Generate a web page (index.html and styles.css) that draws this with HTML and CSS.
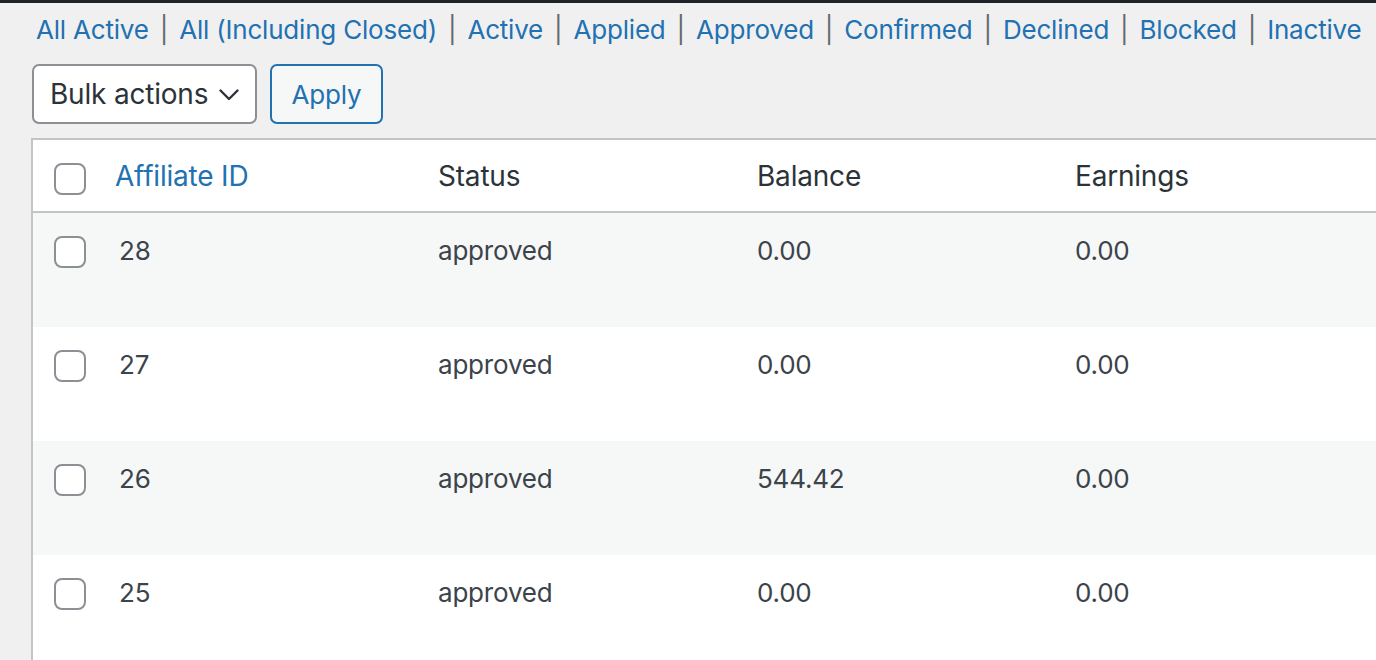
FILE: index.html
```html
<!DOCTYPE html>
<html lang="en">
<head>
<meta charset="utf-8">
<title>Affiliates</title>
<link rel="stylesheet" href="styles.css">
</head>
<body>
<div class="topbar"></div>
<div class="wrap">
  <ul class="subsubsub">
    <li><a href="#">All Active</a></li>
    <li class="sep">|</li>
    <li><a href="#">All (Including Closed)</a></li>
    <li class="sep">|</li>
    <li><a href="#">Active</a></li>
    <li class="sep">|</li>
    <li><a href="#">Applied</a></li>
    <li class="sep">|</li>
    <li><a href="#">Approved</a></li>
    <li class="sep">|</li>
    <li><a href="#">Confirmed</a></li>
    <li class="sep">|</li>
    <li><a href="#">Declined</a></li>
    <li class="sep">|</li>
    <li><a href="#">Blocked</a></li>
    <li class="sep">|</li>
    <li><a href="#">Inactive</a></li>
  </ul>
  <div class="tablenav">
    <div class="select">
      <span>Bulk actions</span>
      <svg class="chev" width="20" height="12" viewBox="0 0 20 12"><path d="M1.5 1.5 L10 10 L18.5 1.5" fill="none" stroke="#2c3338" stroke-width="2.4" stroke-linecap="round" stroke-linejoin="round"/></svg>
    </div>
    <button class="button">Apply</button>
  </div>
  <table class="list">
    <colgroup>
      <col class="c-check"><col class="c-col"><col class="c-col"><col class="c-col3"><col>
    </colgroup>
    <thead>
      <tr>
        <th class="check"><span class="cb"></span></th>
        <th class="idh"><a href="#">Affiliate ID</a></th>
        <th>Status</th>
        <th>Balance</th>
        <th>Earnings</th>
      </tr>
    </thead>
    <tbody>
      <tr class="alt">
        <td class="check"><span class="cb"></span></td>
        <td>28</td><td>approved</td><td>0.00</td><td>0.00</td>
      </tr>
      <tr>
        <td class="check"><span class="cb"></span></td>
        <td>27</td><td>approved</td><td>0.00</td><td>0.00</td>
      </tr>
      <tr class="alt">
        <td class="check"><span class="cb"></span></td>
        <td>26</td><td>approved</td><td>544.42</td><td>0.00</td>
      </tr>
      <tr>
        <td class="check"><span class="cb"></span></td>
        <td>25</td><td>approved</td><td>0.00</td><td>0.00</td>
      </tr>
    </tbody>
  </table>
</div>
</body>
</html>
```
FILE: styles.css
```css
html, body {
  margin: 0;
  padding: 0;
  background: #f0f0f1;
  overflow: hidden;
  height: 660px;
}
body {
  font-family: Inter, "Liberation Sans", sans-serif;
  font-size: 26px;
  letter-spacing: -0.2px;
  color: #3c434a;
}
.topbar {
  height: 3px;
  background: #1d2327;
}
.wrap {
  padding-left: 31px;
}
a {
  color: #2271b1;
  text-decoration: none;
}
.subsubsub {
  list-style: none;
  margin: 7px 0 0 5px;
  padding: 0;
  display: flex;
  white-space: nowrap;
  line-height: 40px;
  height: 40px;
}
.subsubsub .sep {
  color: #646970;
  padding: 0 11px;
}
.tablenav {
  display: flex;
  gap: 13px;
  margin: 14px 0 0 1px;
  height: 60px;
}
.select {
  box-sizing: border-box;
  width: 225px;
  height: 60px;
  border: 2px solid #8c8f94;
  border-radius: 7px;
  background: #fff;
  color: #2c3338;
  font-size: 28px;
  display: flex;
  align-items: center;
  justify-content: space-between;
  padding: 0 16px 0 16px;
}
.chev {
  display: block;
  margin-top: 2px;
}
.button {
  box-sizing: border-box;
  width: 113px;
  height: 60px;
  border: 2px solid #2271b1;
  border-radius: 7px;
  background: #f6f7f7;
  color: #2271b1;
  font: inherit;
  letter-spacing: -0.2px;
  padding: 0;
}
.list {
  margin-top: 14px;
  border-collapse: collapse;
  table-layout: fixed;
  width: 1450px;
  border: 2px solid #c3c4c7;
  background: #fff;
}
.c-check { width: 67px; }
.c-col { width: 319px; }
.c-col3 { width: 318px; }
.list th {
  text-align: left;
  font-weight: 400;
  font-size: 28px;
  color: #2c3338;
  line-height: 39px;
  padding: 17px 20px 15px;
  border-bottom: 2px solid #c3c4c7;
  vertical-align: top;
}
.list th.idh {
  padding-left: 16px;
}
.list td {
  line-height: 39px;
  padding: 18px 20px 57px;
  vertical-align: top;
  white-space: nowrap;
}
.list tr.alt td {
  background: #f6f7f7;
}
.list .check {
  padding: 23px 0 0 21px;
}
.list td.check {
  padding-bottom: 0;
}
.list th.check {
  padding-bottom: 0;
}
.cb {
  display: block;
  box-sizing: border-box;
  width: 32px;
  height: 32px;
  border: 2px solid #8c8f94;
  border-radius: 8px;
  background: #fff;
}
```
